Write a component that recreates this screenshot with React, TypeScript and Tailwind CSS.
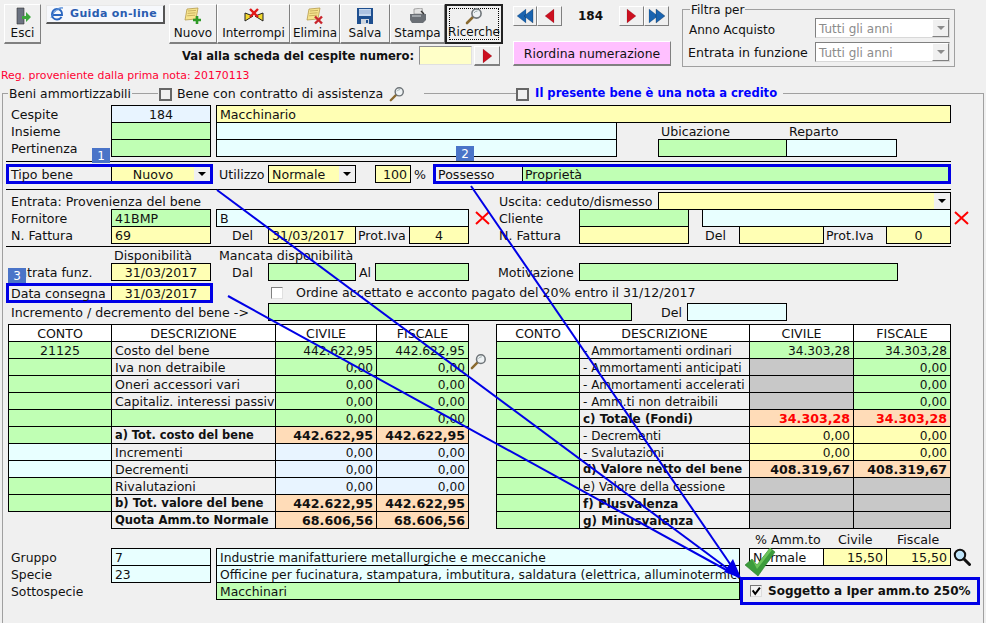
import type { ReactNode } from "react";

const green = "bg-[#c0ffb4]";
const yellow = "bg-[#ffffb4]";
const cyan = "bg-[#e8ffff]";
const azure = "bg-[#e8f4ff]";
const peach = "bg-[#ffdcb8]";
const grey = "bg-[#c8c8c8]";
const plain = "bg-[#f0f0f0]";
const white = "bg-white";

function Cell({ className, children }: { className?: string; children?: ReactNode }) {
  return (
    <div className={`h-[18px] shrink-0 border border-black px-[3px] pt-[2px] flex items-center whitespace-nowrap overflow-hidden ${className ?? ""}`}>
      {children}
    </div>
  );
}

function Row({ className, children }: { className?: string; children?: ReactNode }) {
  return <div className={`flex h-[17px] items-start ${className ?? ""}`}>{children}</div>;
}

function Label({ className, children }: { className?: string; children?: ReactNode }) {
  return <div className={`h-[17px] shrink-0 pt-[3px] flex items-center whitespace-nowrap ${className ?? ""}`}>{children}</div>;
}

function BoxLabel({ className, children }: { className?: string; children?: ReactNode }) {
  return <div className={`h-full shrink-0 flex items-center pl-[2px] pt-[2px] whitespace-nowrap ${className ?? ""}`}>{children}</div>;
}

function Arrow() {
  return <span className="block w-0 h-0 border-x-[4px] border-t-[4px] border-x-transparent border-t-black" />;
}

function Rule() {
  return <div className="h-px w-[945px] ml-[3px] bg-black" />;
}

function RedX() {
  return (
    <svg viewBox="0 0 15 14" className="w-[15px] h-[14px]">
      <path d="M1 1 L14 13 M14 1 L1 13" stroke="#f00" strokeWidth="2" fill="none" />
    </svg>
  );
}

function LensIcon({ className }: { className?: string }) {
  return (
    <svg viewBox="0 0 18 18" className={className}>
      <path d="M2 16 L8 10" stroke="#8a6a30" strokeWidth="2.6" strokeLinecap="round" />
      <circle cx="11.5" cy="6.5" r="4.6" fill="#eef2f4" stroke="#6e7478" strokeWidth="1.6" />
      <path d="M9 6 Q10 4 12.5 4" stroke="#9aa" strokeWidth="1" fill="none" />
    </svg>
  );
}

function Note({ mark }: { mark: "plus" | "x" }) {
  return (
    <svg viewBox="0 0 20 18" className="w-[20px] h-[18px]">
      <path d="M4 2 L15 1 L13 12 L2 13 Z" fill="#f7e48e" stroke="#b59a4a" strokeWidth="0.8" />
      <path d="M5 4 L13 3.4 M4.6 6.4 L12.6 5.8 M4.2 8.8 L12.2 8.2" stroke="#b59a4a" strokeWidth="0.7" />
      {mark === "plus" ? (
        <path d="M14 9 V17 M10 13 H18" stroke="#2e9a26" strokeWidth="2.6" />
      ) : (
        <path d="M10 9.5 L17 16.5 M17 9.5 L10 16.5" stroke="#c8242c" strokeWidth="2.4" />
      )}
    </svg>
  );
}

function ToolButton({ label, className, children }: { label: string; className?: string; children: ReactNode }) {
  return (
    <div className={`h-[40px] shrink-0 flex flex-col items-center justify-end pb-[1px] border border-t-white border-l-white border-r-[#808080] border-b-[#808080] border-b-2 ${className ?? ""}`}>
      <div className="h-[20px] flex items-center justify-center">{children}</div>
      <span className="leading-[15px]">{label}</span>
    </div>
  );
}

function NavButton({ className, children }: { className?: string; children: ReactNode }) {
  return (
    <div className={`h-[20px] shrink-0 flex items-center justify-center border border-t-white border-l-white border-r-[#808080] border-b-[#808080] ${className ?? ""}`}>
      {children}
    </div>
  );
}

function Tri({ dir, color, double }: { dir: "l" | "r"; color: string; double?: boolean }) {
  const one = dir === "r" ? "M2 1 L11 8 L2 15 Z" : "M11 1 L2 8 L11 15 Z";
  return (
    <svg viewBox={double ? "0 0 20 16" : "0 0 13 16"} className={double ? "w-[20px] h-[16px]" : "w-[13px] h-[16px]"}>
      <path d={one} fill={color} stroke="#0003" strokeWidth="0.6" />
      {double && <path d={one} transform="translate(7 0)" fill={color} stroke="#0006" strokeWidth="0.6" />}
    </svg>
  );
}

function Combo() {
  return (
    <div className="w-[135px] h-[20px] flex items-center justify-between bg-white border border-t-[#808080] border-l-[#808080] border-r-[#d8d8d8] border-b-[#d8d8d8] pl-[3px] text-[12px] text-[#8c8c8c]">
      <span className="mt-[2px]">Tutti gli anni</span>
      <span className="w-[17px] h-[18px] flex items-center justify-center bg-[#f0f0f0] border border-t-white border-l-white border-r-[#808080] border-b-[#808080]">
        <span className="block w-0 h-0 border-x-[4px] border-t-[4px] border-x-transparent border-t-[#8c8c8c]" />
      </span>
    </div>
  );
}

function Check() {
  return <span className="block w-[13px] h-[13px] shrink-0 border-2 border-[#666]" />;
}

type TableRow = { a?: string; ab?: string; d: string; bold?: boolean; dc?: string; c: string; cb: string; f: string; fb: string; red?: boolean; ds?: string };

const leftRows: TableRow[] = [
  { a: "21125", ab: green, d: "Costo del bene", c: "442.622,95", cb: green, f: "442.622,95", fb: green },
  { ab: green, d: "Iva non detraibile", c: "0,00", cb: green, f: "0,00", fb: green },
  { ab: green, d: "Oneri accessori vari", c: "0,00", cb: green, f: "0,00", fb: green },
  { ab: green, d: "Capitaliz. interessi passivi", c: "0,00", cb: green, f: "0,00", fb: green },
  { ab: green, d: "", ds: green, c: "0,00", cb: green, f: "0,00", fb: green },
  { ab: green, d: "a) Tot. costo del bene", bold: true, dc: "text-[11.4px]", c: "442.622,95", cb: peach, f: "442.622,95", fb: peach },
  { ab: cyan, d: "Incrementi", c: "0,00", cb: azure, f: "0,00", fb: azure },
  { ab: cyan, d: "Decrementi", c: "0,00", cb: azure, f: "0,00", fb: azure },
  { ab: green, d: "Rivalutazioni", c: "0,00", cb: azure, f: "0,00", fb: azure },
  { ab: green, d: "b) Tot. valore del bene", bold: true, dc: "text-[11.7px]", c: "442.622,95", cb: peach, f: "442.622,95", fb: peach },
  { d: "Quota Amm.to Normale", bold: true, dc: "text-[11.6px]", c: "68.606,56", cb: peach, f: "68.606,56", fb: peach },
];

const rightRows: TableRow[] = [
  { ab: green, d: "- Ammortamenti ordinari", dc: "text-[12px]", c: "34.303,28", cb: green, f: "34.303,28", fb: green },
  { ab: green, d: "- Ammortamenti anticipati", dc: "text-[12px]", c: "", cb: grey, f: "0,00", fb: green },
  { ab: green, d: "- Ammortamenti accelerati", dc: "text-[12px]", c: "", cb: grey, f: "0,00", fb: green },
  { ab: green, d: "- Amm.ti non detraibili", dc: "text-[12px]", c: "", cb: grey, f: "0,00", fb: green },
  { ab: green, d: "c) Totale (Fondi)", bold: true, dc: "text-[12px]", red: true, c: "34.303,28", cb: peach, f: "34.303,28", fb: peach },
  { ab: green, d: "- Decrementi", dc: "text-[12px]", c: "0,00", cb: yellow, f: "0,00", fb: yellow },
  { ab: green, d: "- Svalutazioni", dc: "text-[12px]", c: "0,00", cb: yellow, f: "0,00", fb: yellow },
  { ab: green, d: "d) Valore netto del bene", bold: true, dc: "text-[11.6px]", c: "408.319,67", cb: peach, f: "408.319,67", fb: peach },
  { ab: green, d: "e) Valore della cessione", dc: "text-[12px]", c: "", cb: grey, f: "", fb: grey },
  { ab: green, d: "f) Plusvalenza", bold: true, dc: "text-[12px]", c: "", cb: grey, f: "", fb: grey },
  { ab: green, d: "g) Minusvalenza", bold: true, dc: "text-[12px]", c: "", cb: grey, f: "", fb: grey },
];

function Table({ rows, widths }: { rows: TableRow[]; widths: [string, string, string, string] }) {
  return (
    <div className="shrink-0">
      <Row>
        <Cell className={`${widths[0]} ${white} justify-center`}>CONTO</Cell>
        <Cell className={`${widths[1]} ${white} justify-center -ml-px`}>DESCRIZIONE</Cell>
        <Cell className={`${widths[2]} ${white} justify-center -ml-px`}>CIVILE</Cell>
        <Cell className={`${widths[3]} ${white} justify-center -ml-px`}>FISCALE</Cell>
      </Row>
      {rows.map((r, i) => {
        const num = r.bold ? "font-bold text-[12.6px]" : "text-[12.2px]";
        return (
          <Row key={i}>
            {r.ab ? (
              <Cell className={`${widths[0]} ${r.ab} justify-center`}>{r.a}</Cell>
            ) : (
              <div className={`${widths[0]} shrink-0`} />
            )}
            <Cell className={`${widths[1]} ${r.ds ?? plain} -ml-px ${r.bold ? "font-bold" : ""} ${r.dc ?? ""}`}>{r.d}</Cell>
            <Cell className={`${widths[2]} ${r.cb} -ml-px justify-end ${num} ${r.red ? "text-[#ff0000]" : ""}`}>{r.c}</Cell>
            <Cell className={`${widths[3]} ${r.fb} -ml-px justify-end ${num} ${r.red ? "text-[#ff0000]" : ""}`}>{r.f}</Cell>
          </Row>
        );
      })}
    </div>
  );
}

function Badge({ className, children }: { className?: string; children: ReactNode }) {
  return (
    <div className={`absolute z-20 w-[18px] h-[15px] bg-[#4a74c8] text-white text-[12px] flex items-center justify-center ${className ?? ""}`}>
      {children}
    </div>
  );
}

export default function App() {
  return (
    <div className="relative w-[986px] h-[623px] overflow-hidden bg-[#f0f0f0] text-[12.6px] text-[#111] font-['DejaVu_Sans',sans-serif]">
      {/* top area */}
      <div className="flex h-[85px]">
        <div className="w-[509px] shrink-0 pt-[4px]">
          <div className="flex items-start h-[41px] text-[12px]">
            <ToolButton label="Esci" className="w-[37px] ml-[4px]">
              <svg viewBox="0 0 16 18" className="w-[16px] h-[18px]">
                <path d="M2 1 H9 V17 H2 Z" fill="#6b7280" stroke="#333" strokeWidth="0.6" />
                <path d="M7 9 H11 V5 L16 10 L11 15 V12 H7 Z" fill="#3ca83c" />
              </svg>
            </ToolButton>
            <div className="w-[119px] h-[19px] ml-[5px] mt-px flex items-center gap-[6px] pl-[3px] shrink-0 whitespace-nowrap bg-[#f6f8fc] border border-t-[#e8e8e8] border-l-[#e8e8e8] border-r-[#555] border-b-[#555] border-b-2 border-r-2 text-[11px] text-[#2a5cb0] font-bold tracking-[0.35px]">
              <svg viewBox="0 0 14 14" className="w-[14px] h-[14px] shrink-0">
                <path d="M1.5 8 H12 C12.5 4.5 10 2 7 2 C4 2 2 4.5 2 7.5 C2 10.5 4.2 12.5 7 12.5 C9 12.5 10.6 11.5 11.6 10" stroke="#2a66c0" strokeWidth="2" fill="none" />
                <path d="M1 11 C3 5 9 1 13 1 C11 0 7 1 3 6" stroke="#5a90d8" strokeWidth="0.9" fill="none" />
              </svg>
              Guida on-line
            </div>
            <div className="w-[4px] shrink-0" />
            <ToolButton label="Nuovo" className="w-[48px]"><Note mark="plus" /></ToolButton>
            <ToolButton label="Interrompi" className="w-[73px]">
              <svg viewBox="0 0 20 16" className="w-[20px] h-[16px]">
                <path d="M1 5 L9 8 L1 13 Z M19 5 L11 8 L19 13 Z" fill="#f3d92c" stroke="#222" strokeWidth="1" />
                <path d="M6 1 L14 9 M14 1 L6 9" stroke="#e01818" strokeWidth="2.4" />
              </svg>
            </ToolButton>
            <ToolButton label="Elimina" className="w-[50px]"><Note mark="x" /></ToolButton>
            <ToolButton label="Salva" className="w-[50px]">
              <svg viewBox="0 0 16 16" className="w-[16px] h-[16px]">
                <path d="M0 0 H16 V16 H0 Z" fill="#1e4f8f" />
                <path d="M2 1 H14 V8 H2 Z" fill="#c6d8ee" />
                <path d="M2 3 H14 M2 5 H14" stroke="#7f9fc8" strokeWidth="0.7" />
                <path d="M4 11 H12 V16 H4 Z" fill="#cfd6de" />
                <path d="M9 12 H11 V15 H9 Z" fill="#1e4f8f" />
              </svg>
            </ToolButton>
            <ToolButton label="Stampa" className="w-[55px]">
              <svg viewBox="0 0 18 16" className="w-[18px] h-[16px]">
                <path d="M5 1 L13 0 L14 6 L5 6 Z" fill="#e4e4e4" stroke="#777" strokeWidth="0.6" />
                <path d="M1 6 H17 V12 L14 15 H3 L1 12 Z" fill="#6a6f75" />
                <path d="M3 8 H12" stroke="#c4c8cc" strokeWidth="1.2" />
                <path d="M12 3 L15 6" stroke="#333" strokeWidth="1.4" />
              </svg>
            </ToolButton>
            <div className="w-[58px] h-[40px] shrink-0 p-[2px] border-2 border-[#222]">
              <div className="h-full flex flex-col items-center justify-end border border-dotted border-black">
                <div className="h-[20px] flex items-center"><LensIcon className="w-[18px] h-[18px]" /></div>
                <span className="leading-[14px]">Ricerche</span>
              </div>
            </div>
          </div>
          <div className="flex items-start h-[21px] mt-px">
            <span className="ml-[182px] w-[232px] mt-[2px] text-[11.6px] font-bold whitespace-nowrap">Vai alla scheda del cespite numero:</span>
            <div className="ml-[5px] w-[53px] h-[19px] shrink-0 bg-[#ffffc8] border border-t-[#909090] border-l-[#909090] border-r-[#e0e0e0] border-b-[#e0e0e0]" />
            <NavButton className="ml-[2px] w-[26px] border-b-2"><Tri dir="r" color="#cc1020" /></NavButton>
          </div>
          <div className="mt-px pl-px text-[10.9px] text-[#ff0033] whitespace-nowrap">Reg. proveniente dalla prima nota: 20170113</div>
        </div>
        <div className="w-[162px] ml-[4px] shrink-0 pt-[6px]">
          <div className="flex items-center">
            <NavButton className="w-[24px]"><Tri dir="l" color="#1a64b0" double /></NavButton>
            <NavButton className="w-[25px]"><Tri dir="l" color="#cc1020" /></NavButton>
            <span className="w-[57px] text-center text-[12px] font-bold">184</span>
            <NavButton className="w-[25px]"><Tri dir="r" color="#cc1020" /></NavButton>
            <NavButton className="w-[25px]"><Tri dir="r" color="#1a64b0" double /></NavButton>
          </div>
          <div className="mt-[15px] w-[158px] h-[25px] pt-[2px] flex items-center justify-center text-[12.4px] bg-[#ffc0ff] border border-t-white border-l-white border-r-[#808080] border-b-[#808080] border-b-2">
            Riordina numerazione
          </div>
        </div>
        <div className="relative ml-[7px] mt-[9px] w-[273px] h-[58px] shrink-0 border border-[#a0a0a0] pl-[6px] pt-[6px]">
          <span className="absolute left-[7px] -top-[9px] px-px text-[12px] bg-[#f0f0f0]">Filtra per</span>
          <div className="flex items-center h-[24px]">
            <span className="w-[126px] pt-[4px] text-[12px]">Anno Acquisto</span>
            <Combo />
          </div>
          <div className="flex items-center h-[24px]">
            <span className="w-[126px] pt-[3px] -ml-px mr-px whitespace-nowrap">Entrata in funzione</span>
            <Combo />
          </div>
        </div>
      </div>

      {/* main group */}
      <div className="mt-[8px] ml-[2px] w-[982px] h-[530px] border-x border-t border-[#a0a0a0]">
        <div className="-mt-[8px] flex items-center h-[16px]">
          <span className="ml-[5px] px-px text-[12.3px] bg-[#f0f0f0] whitespace-nowrap">Beni ammortizzabili</span>
          <div className="w-[26px] shrink-0" />
          <div className="flex items-center bg-[#f0f0f0] pl-[1px] pr-[19px]">
            <Check />
            <span className="ml-[5px] whitespace-nowrap">Bene con contratto di assistenza</span>
            <LensIcon className="ml-[6px] w-[16px] h-[16px]" />
          </div>
          <div className="ml-[92px] flex items-center bg-[#f0f0f0] pr-[6px]">
            <Check />
            <span className="ml-[6px] font-bold text-[11.55px] text-[#0000ff] whitespace-nowrap">Il presente bene è una nota a credito</span>
          </div>
        </div>

        <div className="mt-[3px]">
          <Row className="pl-[8px]">
            <Label className="w-[100px]">Cespite</Label>
            <Cell className={`w-[100px] ${azure} justify-center`}>184</Cell>
            <Cell className={`ml-[5px] w-[735px] ${yellow}`}>Macchinario</Cell>
          </Row>
          <Row className="pl-[8px]">
            <Label className="w-[100px]">Insieme</Label>
            <Cell className={`w-[100px] ${green}`} />
            <Cell className={`ml-[5px] w-[401px] ${cyan}`} />
            <Label className="ml-[44px] w-[128px]">Ubicazione</Label>
            <Label>Reparto</Label>
          </Row>
          <Row className="pl-[8px]">
            <Label className="w-[100px]">Pertinenza</Label>
            <Cell className={`w-[100px] ${green}`} />
            <Cell className={`ml-[5px] w-[401px] ${cyan}`} />
            <Cell className={`ml-[41px] w-[129px] ${green}`} />
            <Cell className={`-ml-px w-[111px] ${cyan}`} />
          </Row>
        </div>

        <div className="mt-[5px]"><Rule /></div>

        <div className="mt-[2px] flex h-[20px] items-start">
          <div className="ml-[3px] w-[207px] h-[20px] flex shrink-0 border-[3px] border-[#0000e6]">
            <BoxLabel className="w-[102px]">Tipo bene</BoxLabel>
            <div className={`flex-1 flex items-center justify-between ${yellow} border-l border-black`}>
              <span className="flex-1 mt-[2px] text-center">Nuovo</span>
              <span className="w-[16px] h-[14px] bg-[#f0f0f0] flex items-center justify-center"><Arrow /></span>
            </div>
          </div>
          <Label className="ml-[6px] w-[49px] h-[20px]">Utilizzo</Label>
          <Cell className={`w-[88px] ${yellow} justify-between !pt-0 pr-0 mt-px`}>
            <span className="mt-[2px]">Normale</span>
            <span className="w-[16px] h-[16px] bg-[#f0f0f0] flex items-center justify-center"><Arrow /></span>
          </Cell>
          <Cell className={`ml-[19px] w-[36px] ${yellow} justify-end mt-px`}>100</Cell>
          <Label className="ml-[3px] w-[19px] h-[20px]">%</Label>
          <div className="w-[518px] h-[20px] flex shrink-0 border-[3px] border-[#0000e6]">
            <BoxLabel className="w-[86px]">Possesso</BoxLabel>
            <div className={`flex-1 flex items-center pl-[2px] pt-[2px] ${green} border-l border-black`}>Proprietà</div>
          </div>
        </div>

        <div className="mt-[5px]"><Rule /></div>

        <div className="mt-[2px]">
          <Row className="pl-[8px]">
            <Label className="w-[488px]">Entrata: Provenienza del bene</Label>
            <Label className="w-[159px]">Uscita: ceduto/dismesso</Label>
            <Cell className={`w-[293px] ${yellow} justify-end !pt-0 pr-0`}>
              <span className="w-[16px] h-[16px] bg-[#f0f0f0] flex items-center justify-center"><Arrow /></span>
            </Cell>
          </Row>
          <Row className="pl-[8px]">
            <Label className="w-[100px]">Fornitore</Label>
            <Cell className={`w-[100px] ${green}`}>41BMP</Cell>
            <Cell className={`ml-[5px] w-[253px] ${cyan}`}>B</Cell>
            <div className="ml-[6px] w-[24px] h-[17px] shrink-0 flex items-center"><RedX /></div>
            <Label className="w-[80px]">Cliente</Label>
            <Cell className={`w-[110px] ${green}`} />
            <Cell className={`ml-[13px] w-[249px] ${cyan}`} />
            <div className="ml-[3px] h-[17px] flex items-center"><RedX /></div>
          </Row>
          <Row className="pl-[8px]">
            <Label className="w-[100px]">N. Fattura</Label>
            <Cell className={`w-[100px] ${yellow}`}>69</Cell>
            <Label className="w-[57px] pl-[21px]">Del</Label>
            <Cell className={`w-[88px] ${yellow}`}>31/03/2017</Cell>
            <Label className="w-[53px] pl-[2px]">Prot.Iva</Label>
            <Cell className={`w-[60px] ${yellow} justify-center`}>4</Cell>
            <Label className="w-[30px]" />
            <Label className="w-[80px]">N. Fattura</Label>
            <Cell className={`w-[110px] ${yellow}`} />
            <Label className="w-[50px] pl-[16px]">Del</Label>
            <Cell className={`w-[85px] ${yellow}`} />
            <Label className="w-[62px] pl-[2px]">Prot.Iva</Label>
            <Cell className={`w-[65px] ${yellow} justify-center`}>0</Cell>
          </Row>
        </div>

        <div className="mt-[3px]"><Rule /></div>

        <div className="flex h-[16px] items-center pt-[2px] pl-[111px]">
          <span className="w-[105px] whitespace-nowrap">Disponibilità</span>
          <span className="whitespace-nowrap">Mancata disponibilità</span>
        </div>
        <Row className="pl-[8px]">
          <Label className="w-[100px]">Entrata funz.</Label>
          <Cell className={`w-[100px] ${yellow} justify-center`}>31/03/2017</Cell>
          <Label className="w-[57px] pl-[21px]">Dal</Label>
          <Cell className={`w-[88px] ${green}`} />
          <Label className="w-[19px] pl-[3px]">Al</Label>
          <Cell className={`w-[94px] ${green}`} />
          <Label className="w-[110px] pl-[29px]">Motivazione</Label>
          <Cell className={`w-[319px] ${green}`} />
        </Row>

        <div className="mt-[3px] flex h-[20px] items-center">
          <div className="ml-[3px] w-[207px] h-[20px] flex shrink-0 border-[3px] border-[#0000e6]">
            <BoxLabel className="w-[102px]">Data consegna</BoxLabel>
            <div className={`flex-1 flex items-center justify-center pt-[2px] ${yellow} border-l border-black`}>31/03/2017</div>
          </div>
          <span className="ml-[58px] block w-[12px] h-[12px] shrink-0 bg-white border border-t-[#808080] border-l-[#808080] border-r-[#e0e0e0] border-b-[#e0e0e0]" />
          <span className="ml-[13px] whitespace-nowrap">Ordine accettato e acconto pagato del 20% entro il 31/12/2017</span>
        </div>

        <Row className="pl-[8px]">
          <Label className="w-[257px]">Incremento / decremento del bene -&gt;</Label>
          <Cell className={`w-[364px] ${green}`} />
          <Label className="w-[55px] pl-[29px]">Del</Label>
          <Cell className={`w-[100px] ${cyan}`} />
        </Row>

        <div className="mt-[4px] ml-[5px] flex items-start">
          <Table rows={leftRows} widths={["w-[104px]", "w-[165px]", "w-[102px]", "w-[93px]"]} />
          <div className="w-[27px] shrink-0 pt-[29px] pl-[1px]"><LensIcon className="w-[17px] h-[17px]" /></div>
          <Table rows={rightRows} widths={["w-[84px]", "w-[171px]", "w-[105px]", "w-[98px]"]} />
        </div>

        <div className="mt-[5px] flex items-start">
          <div className="w-[737px] shrink-0 pt-[15px] text-[12.35px]">
            <Row className="pl-[8px]">
              <Label className="w-[100px]">Gruppo</Label>
              <Cell className={`w-[100px] ${cyan}`}>7</Cell>
              <Cell className={`ml-[5px] w-[524px] ${cyan}`}>Industrie manifatturiere metallurgiche e meccaniche</Cell>
            </Row>
            <Row className="pl-[8px]">
              <Label className="w-[100px]">Specie</Label>
              <Cell className={`w-[100px] ${cyan}`}>23</Cell>
              <Cell className={`ml-[5px] w-[524px] ${cyan}`}>Officine per fucinatura, stampatura, imbutitura, saldatura (elettrica, alluminotermica</Cell>
            </Row>
            <Row className="pl-[8px]">
              <Label className="w-[205px]">Sottospecie</Label>
              <Cell className={`w-[524px] ${green}`}>Macchinari</Cell>
            </Row>
          </div>
          <div className="shrink-0">
            <div className="flex h-[15px] items-center whitespace-nowrap">
              <span className="ml-[15px] w-[83px]">% Amm.to</span>
              <span className="w-[59px]">Civile</span>
              <span>Fiscale</span>
            </div>
            <Row className="pl-[9px]">
              <Cell className={`w-[75px] ${white}`}>Normale</Cell>
              <Cell className={`-ml-px w-[64px] ${yellow} justify-end`}>15,50</Cell>
              <Cell className={`-ml-px w-[65px] ${yellow} justify-end`}>15,50</Cell>
              <svg viewBox="0 0 18 18" className="ml-[2px] w-[18px] h-[18px]">
                <circle cx="7" cy="7" r="5.2" fill="#bfe4fa" stroke="#111" strokeWidth="2" />
                <path d="M11 11 L16.5 16.5" stroke="#111" strokeWidth="3" strokeLinecap="round" />
              </svg>
            </Row>
            <div className="mt-[12px] w-[240px] h-[28px] flex items-center border-[3px] border-[#0000e6]">
              <span className="ml-[7px] block w-[12px] h-[12px] shrink-0 bg-[#f4f4f4] border border-t-[#777] border-l-[#777] border-r-[#ddd] border-b-[#ddd]">
                <svg viewBox="0 0 9 9" className="w-[10px] h-[10px]">
                  <path d="M1.5 4 L3.8 7 L8 1.5" stroke="#000" strokeWidth="1.8" fill="none" />
                </svg>
              </span>
              <span className="ml-[6px] text-[12px] font-bold whitespace-nowrap">Soggetto a Iper amm.to 250%</span>
            </div>
          </div>
        </div>
      </div>

      {/* frecce e numeri sopra il modulo */}
      <svg viewBox="0 0 986 623" className="absolute inset-0 w-[986px] h-[623px] z-10 pointer-events-none">
        <g stroke="#0000e6" strokeWidth="2" fill="none">
          <path d="M217 190 L739 577" />
          <path d="M228 296 L739 577" />
          <path d="M471 186 L739 577" />
        </g>
        <path d="M741 578 L724 572 L733 559 Z" fill="#0000e6" />
      </svg>
      <Badge className="left-[92px] top-[148px]">1</Badge>
      <Badge className="left-[456px] top-[146px]">2</Badge>
      <Badge className="left-[8px] top-[268px]">3</Badge>
      <svg viewBox="0 0 32 30" className="absolute z-20 left-[744px] top-[547px] w-[32px] h-[30px]">
        <path d="M1 18 L8 12 L13 18 L26 1 L31 5 L14 29 Z" fill="#3c9c3c" stroke="#2c7c2c" strokeWidth="0.6" />
        <path d="M8 12 L13 18 L26 1 L28 3 L13 22 Z" fill="#6cc45c" />
      </svg>
    </div>
  );
}
